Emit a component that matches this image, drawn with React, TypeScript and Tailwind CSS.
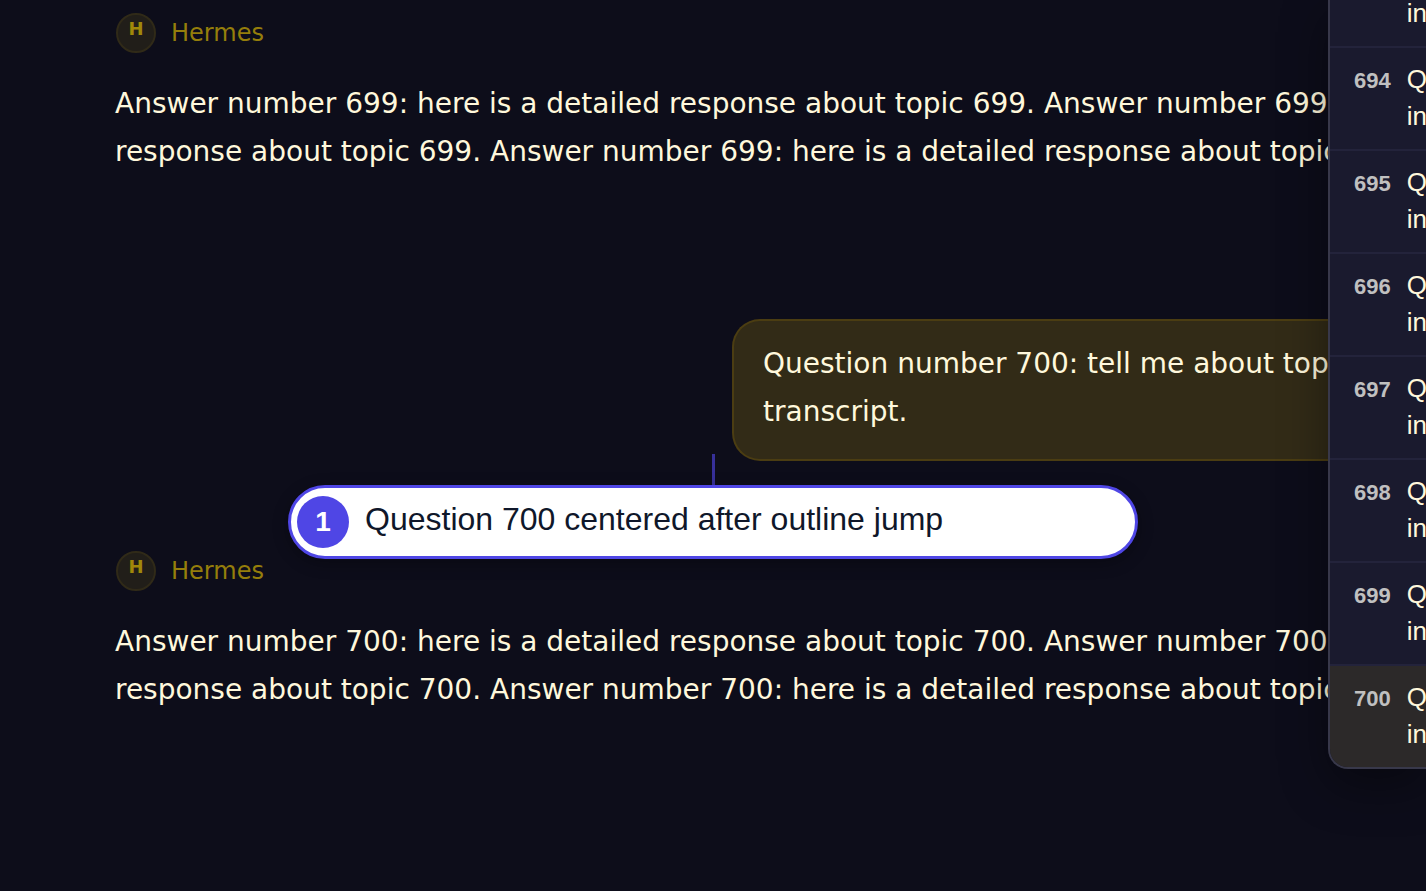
type Message = { topic: number };

const outline = [693, 694, 695, 696, 697, 698, 699, 700];

function AssistantMessage({ topic }: Message) {
  return (
    <article>
      <header className="flex items-center gap-[15px] pl-px">
        <span className="flex size-10 items-start justify-center rounded-full border-2 border-[#302a18] bg-[#211e19] pt-1 text-[18px] leading-5 font-bold text-[#a0880a]">
          H
        </span>
        <span className="text-2xl text-[#957e0b]">Hermes</span>
      </header>
      <p className="mt-[27px] whitespace-nowrap">
        Answer number {topic}: here is a detailed response about topic {topic}. Answer number {topic}: here is a detailed
        <br />
        response about topic {topic}. Answer number {topic}: here is a detailed response about topic {topic}.
      </p>
    </article>
  );
}

function UserMessage({ topic }: Message) {
  return (
    <article className="w-[596px] self-end overflow-hidden rounded-l-[28px] border-2 border-r-0 border-[#4b3d12] bg-[#322b17] pt-[19px] pb-[23px] pl-[29px] whitespace-nowrap">
      Question number {topic}: tell me about topic {topic} in the
      <br />
      transcript.
    </article>
  );
}

function OutlineRow({ topic }: Message) {
  const current = topic === 700;
  return (
    <li className={current ? "bg-[#2c2929]" : "border-b-2 border-[#23233b]"}>
      <a href={`#question-${topic}`} className="flex gap-4 pt-[13px] pb-[14px] pl-6">
        <span className="pt-[2px] text-[22px] leading-9 font-bold text-[#c0c0c0]">{topic}</span>
        <span className="text-[26px] leading-[37px] whitespace-nowrap text-[#fff8dc]">
          Question number {topic}: tell me about topic {topic}
          <br />
          in the transcript.
        </span>
      </a>
    </li>
  );
}

export default function App() {
  return (
    <div className="relative flex min-h-screen items-start overflow-hidden bg-[#0d0d1a] font-['DejaVu_Sans',sans-serif] text-[28px] leading-[48px] text-[#fff8dc]">
      <main className="flex min-w-0 flex-1 flex-col overflow-hidden pt-[9px]">
        <div className="pt-1 pl-[115px]">
          <AssistantMessage topic={699} />
        </div>
        <div className="mt-[143px] flex flex-col">
          <UserMessage topic={700} />
        </div>
        <div className="mt-[90px] pl-[115px]">
          <AssistantMessage topic={700} />
        </div>
      </main>

      <nav
        aria-label="Outline"
        className="relative w-[98px] shrink-0 overflow-hidden rounded-bl-[20px] border-b-2 border-l-2 border-[#38384a] bg-[#1a1a2e] font-['Liberation_Sans',sans-serif] shadow-[0_16px_48px_rgba(0,0,0,0.4)]"
      >
        <ul className="-mt-[55px]">
          {outline.map((topic) => (
            <OutlineRow key={topic} topic={topic} />
          ))}
        </ul>
      </nav>

      <div className="absolute inset-x-0 top-[454px] flex flex-col items-center font-['Liberation_Sans',sans-serif]">
        <span className="h-[31px] w-[3px] bg-[#37309a]" />
        <div className="flex h-[74px] w-[850px] items-center gap-4 rounded-full border-3 border-[#4f46e5] bg-white pl-1.5 shadow-[0_4px_16px_rgba(0,0,0,0.3)]">
          <span className="flex size-[52px] items-center justify-center rounded-full bg-[#4f46e5] text-[28px] font-bold text-white">
            1
          </span>
          <span className="pb-1.5 text-[32px] text-[#0f172a]">Question 700 centered after outline jump</span>
        </div>
      </div>
    </div>
  );
}
